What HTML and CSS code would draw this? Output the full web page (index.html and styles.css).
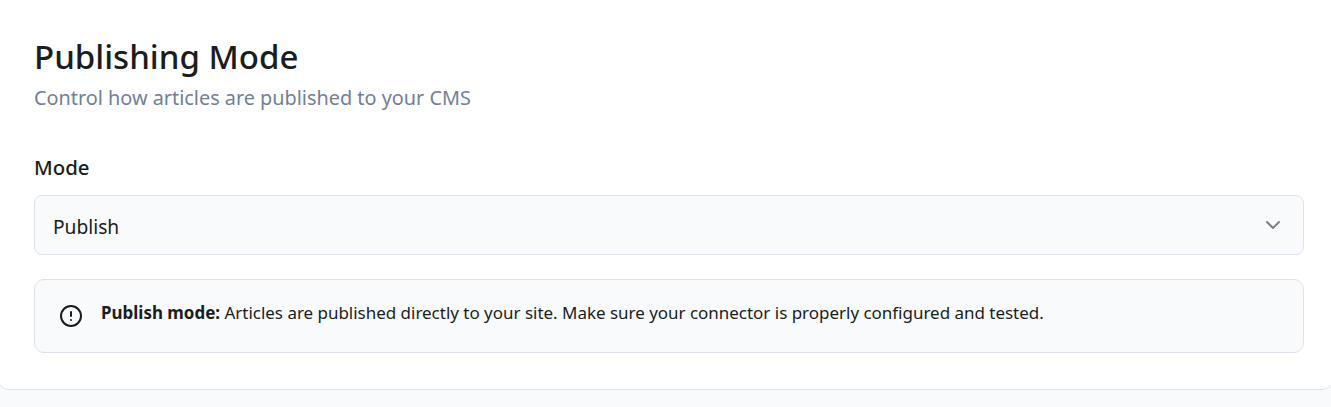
FILE: index.html
```html
<!DOCTYPE html>
<html lang="en">
<head>
<meta charset="utf-8">
<title>Publishing Mode</title>
<link rel="stylesheet" href="styles.css">
</head>
<body>
<section class="card">
  <h1 class="title">Publishing Mode</h1>
  <p class="subtitle">Control how articles are published to your CMS</p>
  <label class="label">Mode</label>
  <div class="select">
    <span class="select-value">Publish</span>
    <svg class="chevron" viewBox="0 0 24 24" fill="none" stroke="currentColor" stroke-width="2" stroke-linecap="round" stroke-linejoin="round"><path d="m6 9 6 6 6-6"/></svg>
  </div>
  <div class="alert">
    <svg class="alert-icon" width="24" height="24" viewBox="0 0 24 24" fill="none" stroke="currentColor" stroke-width="2" stroke-linecap="round" stroke-linejoin="round"><circle cx="12" cy="12" r="10"/><path d="M12 8v4"/><path d="M12 16h.01"/></svg>
    <p class="alert-text"><strong>Publish mode:</strong> Articles are published directly to your site. Make sure your connector is properly configured and tested.</p>
  </div>
</section>
</body>
</html>
```
FILE: styles.css
```css
* { box-sizing: border-box; }
html, body { margin: 0; padding: 0; }
body { background: #f8fafc; height: 407px; overflow: hidden; font-family: "Noto Sans", sans-serif; color: #1a1d20; }
.card { background: #fff; border: 1px solid #dee2ea; border-radius: 12px; height: 399px; margin: -9px -3px 0; padding: 42px 29px 36px 36px; }
.title { margin: 0; font-size: 33px; line-height: 46px; font-weight: 500; }
.subtitle { margin: 0; font-size: 19.85px; line-height: 28px; color: #718096; padding-top: 4px; }
.label { display: block; margin-top: 40px; font-size: 20.4px; line-height: 30px; font-weight: 500; }
.select { margin-top: 13px; height: 60px; background: #f8fafc; border: 1px solid #dee2ea; border-radius: 8px; padding: 0 18px; display: flex; align-items: center; justify-content: space-between; font-size: 19.2px; }
.select-value { padding-top: 3px; }
.chevron { color: #808080; width: 24px; height: 24px; }
.alert { margin-top: 24px; height: 74px; background: #f8fafc; border: 1px solid #dee2ea; border-radius: 10px; padding: 0 24px; display: flex; align-items: center; gap: 18px; }
.alert-icon { flex: none; }
.alert-text { margin: 0 0 6px; font-size: 16.97px; line-height: 24px; }
.alert-text strong { font-weight: 700; }
```
